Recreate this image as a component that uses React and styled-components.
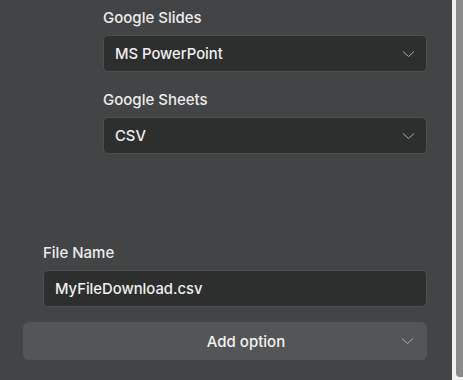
import React from "react";
import styled, { createGlobalStyle } from "styled-components";

const Global = createGlobalStyle`
  html, body { margin: 0; padding: 0; background: #f1f1f1; }
  body { font-family: Inter, "Noto Sans", sans-serif; }
`;

const Frame = styled.div`
  display: flex;
  width: 463px;
  height: 380px;
  overflow: hidden;
`;

const Panel = styled.div`
  width: 452px;
  height: 380px;
  background: #434446;
  display: flex;
  flex-direction: column;
  box-sizing: border-box;
  padding: 8px 25px 0 23px;
`;

const Track = styled.div`
  width: 11px;
  background: #f1f1f1;
  display: flex;
  justify-content: flex-end;
`;

const Thumb = styled.div`
  width: 7px;
  height: 377px;
  background: #8a8a8a;
  border-radius: 0 0 0 4px;
`;

const Field = styled.div`
  display: flex;
  flex-direction: column;
  gap: 7px;
  margin-left: ${(p) => p.$indent || 0}px;
  margin-bottom: ${(p) => p.$mb || 0}px;
`;

const Label = styled.div`
  color: #ececec;
  font-size: 15px;
  font-weight: 500;
  line-height: 20px;
`;

const Box = styled.div`
  height: 37px;
  box-sizing: border-box;
  background: #2d2e2e;
  border: 1px solid #4d4e50;
  border-radius: 5px;
  display: flex;
  align-items: center;
  justify-content: space-between;
  padding: 0 11px 0 11px;
  color: #efefef;
  font-size: 14.8px;
  font-weight: 500;
`;

const Button = styled.div`
  height: 38px;
  background: #545557;
  border-radius: 6px;
  display: flex;
  align-items: center;
  position: relative;
  justify-content: center;
  padding-left: 42px;
  color: #f2f2f2;
  font-size: 15px;
  font-weight: 500;
`;

const ChevronWrap = styled.span`
  display: flex;
  align-items: center;
  ${(p) => p.$abs && `position: absolute; right: 13px; top: 50%; transform: translateY(-50%);`}
`;

const Chevron = ({ abs }) => (
  <ChevronWrap $abs={abs}>
    <svg width="13" height="8" viewBox="0 0 13 8">
      <path d="M1 1.5 L6.5 6.5 L12 1.5" fill="none" stroke="#a9aaab" strokeWidth="1" />
    </svg>
  </ChevronWrap>
);

export default function App() {
  return (
    <>
      <Global />
      <Frame>
        <Panel>
          <Field $indent={80} $mb={18}>
            <Label>Google Slides</Label>
            <Box>
              <span>MS PowerPoint</span>
              <Chevron />
            </Box>
          </Field>
          <Field $indent={80} $mb={89}>
            <Label>Google Sheets</Label>
            <Box>
              <span>CSV</span>
              <Chevron />
            </Box>
          </Field>
          <Field $indent={20} $mb={15}>
            <Label>File Name</Label>
            <Box>
              <span>MyFileDownload.csv</span>
            </Box>
          </Field>
          <Button>
            Add option
            <Chevron abs />
          </Button>
        </Panel>
        <Track>
          <Thumb />
        </Track>
      </Frame>
    </>
  );
}
